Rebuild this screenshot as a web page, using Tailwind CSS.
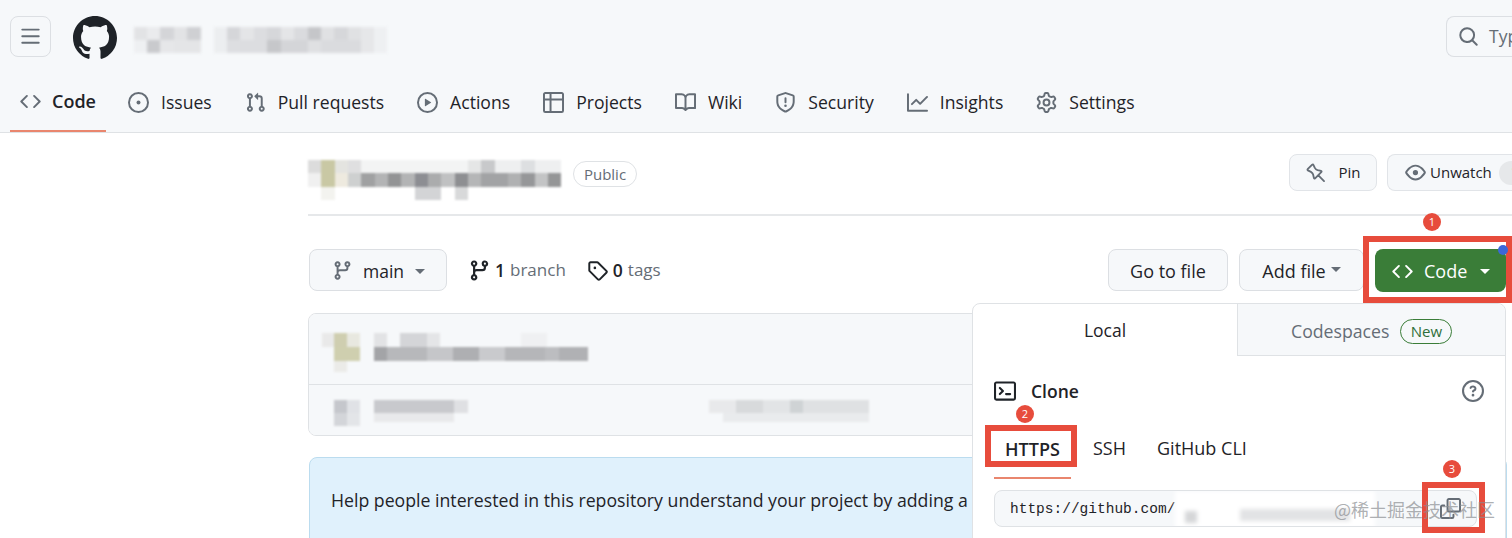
<!DOCTYPE html>
<html lang="en">
  <head>
    <meta charset="UTF-8" />
    <script src="https://cdn.jsdelivr.net/npm/@tailwindcss/browser@4"></script>
    <title>Repository</title>
  </head>
  <body>
    <div class="relative w-[1512px] h-[538px] overflow-hidden bg-white text-[#1f2328] font-['Open_Sans',sans-serif] text-[17.5px]">
      <!-- repo header -->
      <header class="h-[133px] bg-[#f6f8fa] border-b border-[#dfe2e5]">
        <div class="h-[78px] flex items-start pt-[16px] pl-[10px]">
          <button class="w-[41px] h-[41px] flex items-center justify-center rounded-lg border border-[#dcdfe3] bg-[#f6f8fa]">
            <svg class="w-[21px] h-[21px] fill-[#656d76]" viewBox="0 0 16 16"><path d="M1 2.75A.75.75 0 0 1 1.75 2h12.5a.75.75 0 0 1 0 1.5H1.75A.75.75 0 0 1 1 2.75Zm0 5A.75.75 0 0 1 1.75 7h12.5a.75.75 0 0 1 0 1.5H1.75A.75.75 0 0 1 1 7.75ZM1.75 12h12.5a.75.75 0 0 1 0 1.5H1.75a.75.75 0 0 1 0-1.5Z"/></svg>
          </button>
          <svg class="ml-[22px] w-[44px] h-[44px] fill-[#1f2328]" viewBox="0 0 16 16"><path d="M8 0c4.42 0 8 3.58 8 8a8.013 8.013 0 0 1-5.45 7.59c-.4.08-.55-.17-.55-.38 0-.27.01-1.13.01-2.2 0-.75-.25-1.23-.54-1.48 1.78-.2 3.65-.88 3.65-3.95 0-.88-.31-1.59-.82-2.15.08-.2.36-1.02-.08-2.12 0 0-.67-.22-2.2.82-.64-.18-1.32-.27-2-.27-.68 0-1.36.09-2 .27-1.53-1.03-2.2-.82-2.2-.82-.44 1.1-.16 1.92-.08 2.12-.51.56-.82 1.28-.82 2.15 0 3.06 1.86 3.75 3.64 3.95-.23.2-.44.55-.51 1.07-.46.21-1.61.55-2.33-.66-.15-.24-.6-.83-1.23-.82-.67.01-.27.38.01.53.34.19.73.9.82 1.13.16.45.68 1.31 2.69.94 0 .67.01 1.3.01 1.49 0 .21-.15.45-.55.38A7.995 7.995 0 0 1 0 8c0-4.42 3.58-8 8-8Z"/></svg>
          <!-- blurred owner / repo name -->
          <svg class="ml-[16px] mt-[11px] blur-[1.5px]" width="256" height="26" viewBox="0 0 256 26" shape-rendering="crispEdges">
            <rect x="1" width="13" height="13" fill="#e2e3e5"/><rect x="14" width="13" height="13" fill="#eaebed"/><rect x="27" width="14" height="13" fill="#d4d5d8"/><rect x="41" width="13" height="13" fill="#e2e3e5"/><rect x="54" width="14" height="13" fill="#cfd0d3"/>
            <rect x="1" y="13" width="13" height="13" fill="#eef0f2"/><rect x="14" y="13" width="13" height="13" fill="#c9cacd"/><rect x="27" y="13" width="14" height="13" fill="#e6e7e9"/><rect x="41" y="13" width="27" height="13" fill="#e4e5e7"/>
            <rect x="81" width="13" height="26" fill="#eceef0"/><rect x="94" width="13" height="13" fill="#d5d6d9"/><rect x="107" width="14" height="13" fill="#e4e5e7"/><rect x="121" width="13" height="13" fill="#dcdde0"/><rect x="134" width="14" height="13" fill="#d6d7da"/><rect x="148" width="13" height="13" fill="#e4e5e7"/><rect x="161" width="14" height="13" fill="#dadbde"/><rect x="175" width="13" height="13" fill="#c5c6c9"/><rect x="188" width="13" height="13" fill="#e0e1e3"/><rect x="201" width="14" height="13" fill="#d6d7da"/><rect x="215" width="13" height="13" fill="#e0e1e3"/><rect x="228" width="13" height="26" fill="#e6e7e9"/><rect x="241" width="13" height="26" fill="#eef0f2"/>
            <rect x="94" y="13" width="13" height="13" fill="#dddee1"/><rect x="107" y="13" width="27" height="13" fill="#dcdde0"/><rect x="134" y="13" width="14" height="13" fill="#c6c7ca"/><rect x="148" y="13" width="27" height="13" fill="#d4d5d8"/><rect x="175" y="13" width="13" height="13" fill="#dfe0e2"/><rect x="188" y="13" width="40" height="13" fill="#dadbde"/>
          </svg>
          <div class="ml-auto w-[66px] h-[41px] flex items-center gap-[10px] pl-[11px] rounded-l-lg border border-r-0 border-[#dcdfe3] overflow-hidden">
            <svg class="w-[21px] h-[21px] shrink-0 fill-[#656d76]" viewBox="0 0 16 16"><path d="M10.68 11.74a6 6 0 0 1-7.922-8.982 6 6 0 0 1 8.982 7.922l3.04 3.04a.749.749 0 0 1-.326 1.275.749.749 0 0 1-.734-.215ZM11.5 7a4.499 4.499 0 1 0-8.997 0A4.499 4.499 0 0 0 11.5 7Z"/></svg>
            <span class="text-[#656d76]">Typ</span>
          </div>
        </div>
        <nav class="h-[54px] flex pl-[10px] text-[17.6px]">
          <a class="h-[54px] flex items-center gap-[11px] px-[10px] pb-[6px] font-semibold text-[18px] border-b-2 border-[#e9866e]">
            <svg class="w-[21px] h-[21px] fill-[#656d76]" viewBox="0 0 16 16"><path d="m11.28 3.22 4.25 4.25a.75.75 0 0 1 0 1.06l-4.25 4.25a.749.749 0 0 1-1.275-.326.749.749 0 0 1 .215-.734L13.94 8l-3.72-3.72a.749.749 0 0 1 .326-1.275.749.749 0 0 1 .734.215Zm-6.56 0a.751.751 0 0 1 1.042.018.751.751 0 0 1 .018 1.042L2.06 8l3.72 3.72a.749.749 0 0 1-.326 1.275.749.749 0 0 1-.734-.215L.47 8.53a.75.75 0 0 1 0-1.06Z"/></svg>
            Code
          </a>
          <a class="h-[54px] flex items-center gap-[12px] ml-[11px] px-[11px] pb-[6px]">
            <svg class="w-[21px] h-[21px] fill-[#656d76]" viewBox="0 0 16 16"><path d="M8 9.5a1.5 1.5 0 1 0 0-3 1.5 1.5 0 0 0 0 3Z"/><path d="M8 0a8 8 0 1 1 0 16A8 8 0 0 1 8 0ZM1.5 8a6.5 6.5 0 1 0 13 0 6.5 6.5 0 0 0-13 0Z"/></svg>
            Issues
          </a>
          <a class="h-[54px] flex items-center gap-[12px] ml-[11px] px-[11px] pb-[6px]">
            <svg class="w-[21px] h-[21px] fill-[#656d76]" viewBox="0 0 16 16"><path d="M1.5 3.25a2.25 2.25 0 1 1 3 2.122v5.256a2.251 2.251 0 1 1-1.5 0V5.372A2.25 2.25 0 0 1 1.5 3.25Zm5.677-.177L9.573.677A.25.25 0 0 1 10 .854V2.5h1A2.5 2.5 0 0 1 13.5 5v5.628a2.251 2.251 0 1 1-1.5 0V5a1 1 0 0 0-1-1h-1v1.646a.25.25 0 0 1-.427.177L7.177 3.427a.25.25 0 0 1 0-.354ZM3.75 2.5a.75.75 0 1 0 0 1.5.75.75 0 0 0 0-1.5Zm0 9.5a.75.75 0 1 0 0 1.5.75.75 0 0 0 0-1.5Zm8.25.75a.75.75 0 1 0 1.5 0 .75.75 0 0 0-1.5 0Z"/></svg>
            Pull requests
          </a>
          <a class="h-[54px] flex items-center gap-[12px] ml-[11px] px-[11px] pb-[6px]">
            <svg class="w-[21px] h-[21px] fill-[#656d76]" viewBox="0 0 16 16"><path d="M8 0a8 8 0 1 1 0 16A8 8 0 0 1 8 0ZM1.5 8a6.5 6.5 0 1 0 13 0 6.5 6.5 0 0 0-13 0Zm4.879-2.773 4.264 2.559a.25.25 0 0 1 0 .428l-4.264 2.559A.25.25 0 0 1 6 10.559V5.442a.25.25 0 0 1 .379-.215Z"/></svg>
            Actions
          </a>
          <a class="h-[54px] flex items-center gap-[12px] ml-[11px] px-[11px] pb-[6px]">
            <svg class="w-[21px] h-[21px] fill-[#656d76]" viewBox="0 0 16 16"><path d="M0 1.75C0 .784.784 0 1.75 0h12.5C15.216 0 16 .784 16 1.75v12.5A1.75 1.75 0 0 1 14.25 16H1.75A1.75 1.75 0 0 1 0 14.25ZM6.5 6.5v8h7.75a.25.25 0 0 0 .25-.25V6.5Zm8-1.5V1.75a.25.25 0 0 0-.25-.25H6.5V5Zm-13 1.5v7.75c0 .138.112.25.25.25H5v-8ZM5 5V1.5H1.75a.25.25 0 0 0-.25.25V5Z"/></svg>
            Projects
          </a>
          <a class="h-[54px] flex items-center gap-[12px] ml-[11px] px-[11px] pb-[6px]">
            <svg class="w-[21px] h-[21px] fill-[#656d76]" viewBox="0 0 16 16"><path d="M0 1.75A.75.75 0 0 1 .75 1h4.253c1.227 0 2.317.59 3 1.501A3.743 3.743 0 0 1 11.006 1h4.245a.75.75 0 0 1 .75.75v10.5a.75.75 0 0 1-.75.75h-4.507a2.25 2.25 0 0 0-1.591.659l-.622.621a.75.75 0 0 1-1.06 0l-.622-.621A2.25 2.25 0 0 0 5.258 13H.75a.75.75 0 0 1-.75-.75Zm7.251 10.324.004-5.073-.002-2.253A2.25 2.25 0 0 0 5.003 2.5H1.5v9h3.757a3.75 3.75 0 0 1 1.994.574ZM8.755 4.75l-.004 7.322a3.752 3.752 0 0 1 1.992-.572H14.5v-9h-3.495a2.25 2.25 0 0 0-2.25 2.25Z"/></svg>
            Wiki
          </a>
          <a class="h-[54px] flex items-center gap-[12px] ml-[11px] px-[11px] pb-[6px]">
            <svg class="w-[21px] h-[21px] fill-[#656d76]" viewBox="0 0 16 16"><path d="M7.467.133a1.748 1.748 0 0 1 1.066 0l5.25 1.68A1.75 1.75 0 0 1 15 3.48V7c0 1.566-.32 3.182-1.303 4.682-.983 1.498-2.585 2.813-5.032 3.855a1.697 1.697 0 0 1-1.33 0c-2.447-1.042-4.049-2.357-5.032-3.855C1.32 10.182 1 8.566 1 7V3.48a1.75 1.75 0 0 1 1.217-1.667Zm.61 1.429a.25.25 0 0 0-.153 0l-5.25 1.68a.25.25 0 0 0-.174.238V7c0 1.358.275 2.666 1.057 3.86.784 1.194 2.121 2.34 4.366 3.297a.196.196 0 0 0 .154 0c2.245-.956 3.582-2.104 4.366-3.298C13.225 9.666 13.5 8.36 13.5 7V3.48a.251.251 0 0 0-.174-.237l-5.25-1.68ZM8.75 4.75v3a.75.75 0 0 1-1.5 0v-3a.75.75 0 0 1 1.5 0ZM9 10.5a1 1 0 1 1-2 0 1 1 0 0 1 2 0Z"/></svg>
            Security
          </a>
          <a class="h-[54px] flex items-center gap-[12px] ml-[11px] px-[11px] pb-[6px]">
            <svg class="w-[21px] h-[21px] fill-[#656d76]" viewBox="0 0 16 16"><path d="M1.5 1.75V13.5h13.75a.75.75 0 0 1 0 1.5H.75a.75.75 0 0 1-.75-.75V1.75a.75.75 0 0 1 1.5 0Zm14.28 2.53-5.25 5.25a.75.75 0 0 1-1.06 0L7 7.06 4.28 9.78a.751.751 0 0 1-1.042-.018.751.751 0 0 1-.018-1.042l3.25-3.25a.75.75 0 0 1 1.06 0L10 7.94l4.72-4.72a.751.751 0 0 1 1.042.018.751.751 0 0 1 .018 1.042Z"/></svg>
            Insights
          </a>
          <a class="h-[54px] flex items-center gap-[12px] ml-[11px] px-[11px] pb-[6px]">
            <svg class="w-[21px] h-[21px] fill-[#656d76]" viewBox="0 0 16 16"><path d="M8 0a8.2 8.2 0 0 1 .701.031C9.444.095 9.99.645 10.16 1.29l.288 1.107c.018.066.079.158.212.224.231.114.454.243.668.386.123.082.233.09.299.071l1.103-.303c.644-.176 1.392.021 1.82.63.27.385.506.792.704 1.218.315.675.111 1.422-.364 1.891l-.814.806c-.049.048-.098.147-.088.294.016.257.016.515 0 .772-.01.147.038.246.088.294l.814.806c.475.469.679 1.216.364 1.891a7.977 7.977 0 0 1-.704 1.217c-.428.61-1.176.807-1.82.63l-1.102-.302c-.067-.019-.177-.011-.3.071a5.909 5.909 0 0 1-.668.386c-.133.066-.194.158-.211.224l-.29 1.106c-.168.646-.715 1.196-1.458 1.26a8.006 8.006 0 0 1-1.402 0c-.743-.064-1.289-.614-1.458-1.26l-.289-1.106c-.018-.066-.079-.158-.212-.224a5.738 5.738 0 0 1-.668-.386c-.123-.082-.233-.09-.299-.071l-1.103.303c-.644.176-1.392-.021-1.82-.63a8.12 8.12 0 0 1-.704-1.218c-.315-.675-.111-1.422.363-1.891l.815-.806c.05-.048.098-.147.088-.294a6.214 6.214 0 0 1 0-.772c.01-.147-.038-.246-.088-.294l-.815-.806C.635 6.045.431 5.298.746 4.623a7.92 7.92 0 0 1 .704-1.217c.428-.61 1.176-.807 1.82-.63l1.102.302c.067.019.177.011.3-.071.214-.143.437-.272.668-.386.133-.066.194-.158.211-.224l.29-1.106C6.009.645 6.556.095 7.299.03 7.53.01 7.764 0 8 0Zm-.571 1.525c-.036.003-.108.036-.137.146l-.289 1.105c-.147.561-.549.967-.998 1.189-.173.086-.34.183-.5.29-.417.278-.97.423-1.529.27l-1.103-.303c-.109-.03-.175.016-.195.045-.22.312-.412.644-.573.99-.014.031-.021.11.059.19l.815.806c.411.406.562.957.53 1.456a4.709 4.709 0 0 0 0 .582c.032.499-.119 1.05-.53 1.456l-.815.806c-.081.08-.073.159-.059.19.162.346.353.677.573.989.02.03.085.076.195.046l1.102-.303c.56-.153 1.113-.008 1.53.27.161.107.328.204.501.29.447.222.85.629.997 1.189l.289 1.105c.029.109.101.143.137.146a6.6 6.6 0 0 0 1.142 0c.036-.003.108-.036.137-.146l.289-1.105c.147-.561.549-.967.998-1.189.173-.086.34-.183.5-.29.417-.278.97-.423 1.529-.27l1.103.303c.109.029.175-.016.195-.045.22-.313.411-.644.573-.99.014-.031.021-.11-.059-.19l-.815-.806c-.411-.406-.562-.957-.53-1.456a4.709 4.709 0 0 0 0-.582c-.032-.499.119-1.05.53-1.456l.815-.806c.081-.08.073-.159.059-.19a6.464 6.464 0 0 0-.573-.989c-.02-.03-.085-.076-.195-.046l-1.102.303c-.56.153-1.113.008-1.53-.27a4.44 4.44 0 0 0-.501-.29c-.447-.222-.85-.629-.997-1.189l-.289-1.105c-.029-.11-.101-.143-.137-.146a6.6 6.6 0 0 0-1.142 0ZM11 8a3 3 0 1 1-6 0 3 3 0 0 1 6 0ZM9.5 8a1.5 1.5 0 1 0-3.001.001A1.5 1.5 0 0 0 9.5 8Z"/></svg>
            Settings
          </a>
        </nav>
      </header>

      <main class="pl-[308px]">
        <!-- repo title row -->
        <div class="h-[83px] flex items-start border-b-2 border-[#e6e8ea]">
          <svg class="mt-[27px] blur-[1px]" width="265" height="40" viewBox="0 0 265 40" shape-rendering="crispEdges">
            <rect x="0" width="13" height="13" fill="#dcdcdc"/><rect x="13" width="14" height="27" fill="#c9c8a4"/><rect x="27" width="13" height="13" fill="#e4e4e0"/><rect x="40" width="13" height="13" fill="#dfdfe0"/><rect x="53" width="120" height="13" fill="#f3f4f4"/><rect x="160" width="13" height="13" fill="#e5e6e6"/><rect x="173" width="14" height="13" fill="#c8c9cb"/><rect x="187" width="26" height="13" fill="#eeeff0"/><rect x="213" width="14" height="13" fill="#dddfe1"/><rect x="227" width="26" height="13" fill="#eeeff0"/>
            <rect x="0" y="13" width="13" height="14" fill="#f0f0f0"/><rect x="27" y="13" width="13" height="14" fill="#eeeadf"/><rect x="40" y="13" width="13" height="14" fill="#ced0d0"/><rect x="53" y="13" width="14" height="14" fill="#a0a1a2"/><rect x="67" y="13" width="13" height="14" fill="#b3b4b5"/><rect x="80" y="13" width="13" height="14" fill="#939495"/><rect x="93" y="13" width="14" height="14" fill="#b3b4b5"/><rect x="107" y="13" width="13" height="14" fill="#8d8e93"/><rect x="120" y="13" width="13" height="14" fill="#abacad"/><rect x="133" y="13" width="14" height="14" fill="#c0c1c2"/><rect x="147" y="13" width="13" height="14" fill="#8e8f92"/><rect x="160" y="13" width="13" height="14" fill="#b5b6b7"/><rect x="173" y="13" width="27" height="14" fill="#a2a3a5"/><rect x="200" y="13" width="13" height="14" fill="#b0b1b2"/><rect x="213" y="13" width="14" height="14" fill="#969799"/><rect x="227" y="13" width="13" height="14" fill="#c3c4c5"/><rect x="240" y="13" width="13" height="14" fill="#959697"/>
            <rect x="13" y="27" width="14" height="13" fill="#f3f3ef"/><rect x="107" y="27" width="26" height="13" fill="#d3d4d6"/><rect x="147" y="27" width="13" height="13" fill="#d8d9da"/>
          </svg>
          <span class="mt-[28px] h-[26px] w-[64px] flex items-center justify-center rounded-full border border-[#dfe2e5] text-[#656d76] text-[15px]">Public</span>
          <button class="ml-auto mt-[21px] w-[88px] h-[37px] flex items-center justify-center gap-[12px] rounded-lg border border-[#e1e4e8] bg-[#f6f8fa] text-[15px]">
            <svg class="w-[21px] h-[21px]" viewBox="0 0 16 16" fill="none" stroke="#656d76" stroke-width="1.4" stroke-linejoin="round" stroke-linecap="round"><path d="M2 5.5 5.5 2Q6 1.6 6.4 2.2L7.5 4.5Q8.2 5.8 9.6 6.2L12.2 6.8Q13 7 12.4 7.7L7.7 12.4Q7 13 6.8 12.2L6.2 9.6Q5.8 8.2 4.5 7.5L2.2 6.4Q1.6 6 2 5.5ZM10 10 14.5 14.5"/></svg>
            Pin
          </button>
          <button class="ml-[10px] mt-[21px] w-[125px] h-[37px] flex items-center gap-[4px] pl-[17px] rounded-l-lg border border-r-0 border-[#e1e4e8] bg-[#f6f8fa] text-[15px] overflow-hidden">
            <svg class="w-[21px] h-[21px] shrink-0 fill-[#656d76]" viewBox="0 0 16 16"><path d="M8 2c1.981 0 3.671.992 4.933 2.078 1.27 1.091 2.187 2.345 2.637 3.023a1.62 1.62 0 0 1 0 1.798c-.45.678-1.367 1.932-2.637 3.023C11.67 13.008 9.981 14 8 14c-1.981 0-3.671-.992-4.933-2.078C1.797 10.83.88 9.576.43 8.898a1.62 1.62 0 0 1 0-1.798c.45-.677 1.367-1.931 2.637-3.022C4.33 2.992 6.019 2 8 2ZM1.679 7.932a.12.12 0 0 0 0 .136c.411.622 1.241 1.75 2.366 2.717C5.176 11.758 6.527 12.5 8 12.5c1.473 0 2.825-.742 3.955-1.715 1.124-.967 1.954-2.096 2.366-2.717a.12.12 0 0 0 0-.136c-.412-.621-1.242-1.75-2.366-2.717C10.824 4.242 9.473 3.5 8 3.5c-1.473 0-2.825.742-3.955 1.715-1.124.967-1.954 2.096-2.366 2.717ZM8 10a2 2 0 1 1-.001-3.999A2 2 0 0 1 8 10Z"/></svg>
            Unwatch
            <span class="ml-[3px] shrink-0 w-[26px] h-[24px] rounded-full bg-[#e6e8ea] pl-[6px] text-[14px]">1</span>
          </button>
        </div>

        <!-- branch row -->
        <div class="w-[1198px] mt-[33px] h-[43px] flex items-start">
          <button class="ml-px w-[138px] h-[42px] flex items-center pl-[22px] pt-[2px] rounded-lg border border-[#dcdfe3] bg-[#f6f8fa]">
            <svg class="-mt-[2px] w-[21px] h-[21px] fill-[#656d76]" viewBox="0 0 16 16"><path d="M9.5 3.25a2.25 2.25 0 1 1 3 2.122V6A2.5 2.5 0 0 1 10 8.5H6a1 1 0 0 0-1 1v1.128a2.251 2.251 0 1 1-1.5 0V5.372a2.25 2.25 0 1 1 1.5 0v1.836A2.493 2.493 0 0 1 6 7h4a1 1 0 0 0 1-1v-.628A2.25 2.25 0 0 1 9.5 3.25Zm-6 0a.75.75 0 1 0 1.5 0 .75.75 0 0 0-1.5 0Zm8.25-.75a.75.75 0 1 0 0 1.5.75.75 0 0 0 0-1.5ZM4.25 12a.75.75 0 1 0 0 1.5.75.75 0 0 0 0-1.5Z"/></svg>
            <span class="ml-[10px]">main</span>
            <span class="ml-[11px] w-0 h-0 border-x-[5px] border-x-transparent border-t-[5px] border-t-[#656d76]"></span>
          </button>
          <div class="ml-[21px] h-[42px] flex items-center">
            <svg class="w-[23px] h-[23px] fill-[#1f2328]" viewBox="0 0 16 16"><path d="M9.5 3.25a2.25 2.25 0 1 1 3 2.122V6A2.5 2.5 0 0 1 10 8.5H6a1 1 0 0 0-1 1v1.128a2.251 2.251 0 1 1-1.5 0V5.372a2.25 2.25 0 1 1 1.5 0v1.836A2.493 2.493 0 0 1 6 7h4a1 1 0 0 0 1-1v-.628A2.25 2.25 0 0 1 9.5 3.25Zm-6 0a.75.75 0 1 0 1.5 0 .75.75 0 0 0-1.5 0Zm8.25-.75a.75.75 0 1 0 0 1.5.75.75 0 0 0 0-1.5ZM4.25 12a.75.75 0 1 0 0 1.5.75.75 0 0 0 0-1.5Z"/></svg>
            <b class="ml-[4px] font-semibold">1</b>
            <span class="ml-[5px] text-[#656d76] text-[17px]">branch</span>
            <svg class="ml-[21px] w-[21px] h-[21px] fill-[#1f2328]" viewBox="0 0 16 16"><path d="M1 7.775V2.75C1 1.784 1.784 1 2.75 1h5.025c.464 0 .91.184 1.238.513l6.25 6.25a1.75 1.75 0 0 1 0 2.474l-5.026 5.026a1.75 1.75 0 0 1-2.474 0l-6.25-6.25A1.752 1.752 0 0 1 1 7.775Zm1.5 0c0 .066.026.13.073.177l6.25 6.25a.25.25 0 0 0 .354 0l5.025-5.025a.25.25 0 0 0 0-.354l-6.25-6.25a.25.25 0 0 0-.177-.073H2.75a.25.25 0 0 0-.25.25ZM6 5a1 1 0 1 1 0 2 1 1 0 0 1 0-2Z"/></svg>
            <b class="ml-[5px] font-semibold">0</b>
            <span class="ml-[5px] text-[#656d76] text-[17px]">tags</span>
          </div>
          <button class="ml-auto w-[120px] h-[42px] flex items-center justify-center pt-[2px] rounded-lg border border-[#dcdfe3] bg-[#f6f8fa] text-[18px]">Go to file</button>
          <button class="ml-[11px] w-[125px] h-[42px] flex items-center justify-center gap-[5px] pt-[2px] rounded-lg border border-[#dcdfe3] bg-[#f6f8fa] text-[18px]">
            Add file
            <span class="-mt-[4px] w-0 h-0 border-x-[5px] border-x-transparent border-t-[5px] border-t-[#656d76]"></span>
          </button>
          <button class="ml-[11px] w-[131px] h-[43px] flex items-center pl-[17px] pt-[1px] rounded-lg bg-[#3a7d38] text-white text-[18px]">
            <svg class="w-[21px] h-[21px] fill-white" viewBox="0 0 16 16"><path d="m11.28 3.22 4.25 4.25a.75.75 0 0 1 0 1.06l-4.25 4.25a.749.749 0 0 1-1.275-.326.749.749 0 0 1 .215-.734L13.94 8l-3.72-3.72a.749.749 0 0 1 .326-1.275.749.749 0 0 1 .734.215Zm-6.56 0a.751.751 0 0 1 1.042.018.751.751 0 0 1 .018 1.042L2.06 8l3.72 3.72a.749.749 0 0 1-.326 1.275.749.749 0 0 1-.734-.215L.47 8.53a.75.75 0 0 1 0-1.06Z"/></svg>
            <span class="ml-[11px]">Code</span>
            <span class="ml-[13px] w-0 h-0 border-x-[5px] border-x-transparent border-t-[5px] border-t-white"></span>
          </button>
        </div>

        <!-- latest commit box -->
        <div class="w-[1198px] mt-[21px] h-[123px] rounded-lg border border-[#dfe2e5] overflow-hidden flex flex-col">
          <div class="h-[71px] shrink-0 bg-[#f6f8fa] border-b border-[#dfe2e5]">
            <svg class="mt-[19px] blur-[1px]" width="300" height="48" viewBox="0 0 300 48" shape-rendering="crispEdges">
              <rect x="13" y="0" width="12" height="14" fill="#e9e9e9"/><rect x="25" y="0" width="13" height="14" fill="#cfceb0"/><rect x="38" y="0" width="13" height="14" fill="#e8e8e0"/><rect x="25" y="14" width="26" height="14" fill="#cfcfaf"/><rect x="25" y="28" width="13" height="11" fill="#ebebe8"/>
              <rect x="65" y="0" width="13" height="14" fill="#e2e3e5"/><rect x="91" y="0" width="27" height="14" fill="#d4d5d8"/><rect x="118" y="0" width="13" height="14" fill="#e4e5e7"/><rect x="212" y="0" width="26" height="14" fill="#eff0f2"/>
              <rect x="65" y="14" width="13" height="14" fill="#a3a4a7"/><rect x="78" y="14" width="40" height="14" fill="#b7b8bb"/><rect x="118" y="14" width="26" height="14" fill="#c5c6c9"/><rect x="144" y="14" width="26" height="14" fill="#aeafb2"/><rect x="170" y="14" width="26" height="14" fill="#c9cacd"/><rect x="196" y="14" width="40" height="14" fill="#b5b6b9"/><rect x="236" y="14" width="14" height="14" fill="#bcbdc0"/><rect x="250" y="14" width="29" height="14" fill="#b0b1b4"/>
            </svg>
          </div>
          <div class="flex-1 bg-[#f6f8fa]">
            <svg class="mt-[15px] blur-[1px]" width="580" height="30" viewBox="0 0 580 30" shape-rendering="crispEdges">
              <rect x="25" width="13" height="13" fill="#c5c7cc"/><rect x="38" width="13" height="13" fill="#e0e2e6"/><rect x="25" y="13" width="13" height="13" fill="#d3d5d9"/><rect x="38" y="13" width="13" height="13" fill="#e3e5e8"/>
              <rect x="65" width="80" height="13" fill="#c8c9cd"/><rect x="145" width="14" height="13" fill="#dfe0e3"/><rect x="65" y="13" width="80" height="9" fill="#e8e9eb"/>
              <rect x="400" width="27" height="13" fill="#e8e9eb"/><rect x="427" width="27" height="13" fill="#d8dadc"/><rect x="454" width="27" height="13" fill="#e2e4e6"/><rect x="481" width="13" height="13" fill="#cfd3d5"/><rect x="494" width="66" height="13" fill="#dfe1e3"/><rect x="414" y="13" width="146" height="9" fill="#e9ebed"/>
            </svg>
          </div>
        </div>

        <!-- readme hint -->
        <div class="w-[1198px] mt-[21px] ml-px h-[120px] pt-[29px] pl-[21px] rounded-lg border border-[#bbdcef] bg-[#e0f1fc] text-[17.7px]">
          Help people interested in this repository understand your project by adding a README.
        </div>
      </main>

      <!-- clone popover -->
      <div class="absolute left-[972px] top-[303px] w-[534px] h-[260px] bg-white rounded-t-lg border border-[#dfe2e5]">
        <div class="h-[52px] flex">
          <div class="w-[265px] flex items-center justify-center pt-[1px] border-r border-[#dfe2e5]">Local</div>
          <div class="flex-1 flex items-center pl-[53px] pt-[4px] gap-[11px] bg-[#f6f8fa] border-b border-[#dfe2e5] rounded-tr-lg text-[#656d76] text-[17.7px]">
            Codespaces
            <span class="w-[52px] h-[25px] flex items-center justify-center rounded-full border border-[#3a7d38] text-[#2f6f3a] text-[15px]">New</span>
          </div>
        </div>
        <div class="flex items-center pl-[21px] pr-[21px] mt-[22px]">
          <svg class="w-[22px] h-[22px] fill-[#1f2328]" viewBox="0 0 16 16"><path d="M0 2.75C0 1.784.784 1 1.75 1h12.5c.966 0 1.75.784 1.75 1.75v10.5A1.75 1.75 0 0 1 14.25 15H1.75A1.75 1.75 0 0 1 0 13.25Zm1.75-.25a.25.25 0 0 0-.25.25v10.5c0 .138.112.25.25.25h12.5a.25.25 0 0 0 .25-.25V2.75a.25.25 0 0 0-.25-.25ZM7.25 8a.749.749 0 0 1-.22.53l-2.25 2.25a.749.749 0 0 1-1.275-.326.749.749 0 0 1 .215-.734L5.44 8 3.72 6.28a.749.749 0 0 1 .326-1.275.749.749 0 0 1 .734.215l2.25 2.25c.141.14.22.331.22.53Zm1.5 1.5h3a.75.75 0 0 1 0 1.5h-3a.75.75 0 0 1 0-1.5Z"/></svg>
          <span class="ml-[15px] font-semibold">Clone</span>
          <svg class="ml-auto w-[22px] h-[22px] fill-[#656d76]" viewBox="0 0 16 16"><path d="M0 8a8 8 0 1 1 16 0A8 8 0 0 1 0 8Zm8-6.5a6.5 6.5 0 1 0 0 13 6.5 6.5 0 0 0 0-13ZM6.92 6.085h.001a.749.749 0 1 1-1.342-.67c.169-.339.436-.701.849-.977C6.845 4.16 7.369 4 8 4a2.756 2.756 0 0 1 1.637.525c.503.377.863.965.863 1.725 0 .448-.115.83-.329 1.15-.205.307-.47.513-.692.662-.109.072-.22.138-.313.195l-.006.004a6.24 6.24 0 0 0-.26.16.952.952 0 0 0-.276.245.75.75 0 0 1-1.248-.832c.184-.264.42-.489.692-.661.103-.067.207-.132.313-.195l.007-.004c.1-.061.182-.11.258-.161a.969.969 0 0 0 .277-.245C8.96 6.514 9 6.427 9 6.25a.612.612 0 0 0-.262-.525A1.27 1.27 0 0 0 8 5.5c-.369 0-.595.09-.74.187a1.01 1.01 0 0 0-.34.398ZM9 11a1 1 0 1 1-2 0 1 1 0 0 1 2 0Z"/></svg>
        </div>
        <div class="flex mt-[31px] ml-[21px] h-[56px] items-start text-[18px]">
          <span class="w-[77px] h-[44px] pt-[1px] text-center font-semibold border-b-2 border-[#e9866e]">HTTPS</span>
          <span class="ml-[22px]">SSH</span>
          <span class="ml-[31px]">GitHub CLI</span>
        </div>
        <div class="ml-[21px] -mt-[1px] w-[483px] h-[37px] flex items-center pl-[15px] pt-[2px] rounded-lg border border-[#dfe2e5] bg-[#f6f8fa] font-['Liberation_Mono',monospace] text-[14.5px] overflow-hidden">
          https://github.com/
          <svg class="blur-[2px] shrink-0" width="220" height="37" viewBox="0 0 220 37" shape-rendering="crispEdges">
            <rect width="200" height="37" fill="#ffffff"/><rect x="10" y="20" width="12" height="12" fill="#d5d6d8"/><rect x="65" y="18" width="110" height="12" fill="#e2e3e5"/>
          </svg>
        </div>
      </div>

      <!-- tutorial annotations over the screenshot -->
      <div class="absolute left-[1363px] top-[236px] w-[149px] h-[67px] border-[6px] border-[#e74c3c]"></div>
      <div class="absolute left-[985px] top-[425px] w-[92px] h-[42px] border-[6px] border-[#e74c3c]"></div>
      <div class="absolute left-[1422px] top-[482px] w-[63px] h-[51px] border-[6px] border-[#e74c3c]"></div>
      <span class="absolute left-[1423px] top-[213px] w-[18px] h-[18px] rounded-full bg-[#e74c3c] text-white text-[11px] flex items-center justify-center">1</span>
      <span class="absolute left-[1016px] top-[405px] w-[18px] h-[18px] rounded-full bg-[#e74c3c] text-white text-[11px] flex items-center justify-center">2</span>
      <span class="absolute left-[1443px] top-[460px] w-[18px] h-[18px] rounded-full bg-[#e74c3c] text-white text-[11px] flex items-center justify-center">3</span>
      <span class="absolute left-[1498px] top-[245px] w-[10px] h-[10px] rounded-full bg-[#3b67d8]"></span>
      <svg class="absolute left-[1440px] top-[498px] w-[21px] h-[21px] fill-[#656d76]" viewBox="0 0 16 16"><path d="M0 6.75C0 5.784.784 5 1.75 5h1.5a.75.75 0 0 1 0 1.5h-1.5a.25.25 0 0 0-.25.25v7.5c0 .138.112.25.25.25h7.5a.25.25 0 0 0 .25-.25v-1.5a.75.75 0 0 1 1.5 0v1.5A1.75 1.75 0 0 1 9.25 16h-7.5A1.75 1.75 0 0 1 0 14.25Z"/><path d="M5 1.75C5 .784 5.784 0 6.75 0h7.5C15.216 0 16 .784 16 1.75v7.5A1.75 1.75 0 0 1 14.25 11h-7.5A1.75 1.75 0 0 1 5 9.25Zm1.75-.25a.25.25 0 0 0-.25.25v7.5c0 .138.112.25.25.25h7.5a.25.25 0 0 0 .25-.25v-7.5a.25.25 0 0 0-.25-.25Z"/></svg>
      <span class="absolute left-[1334px] top-[497px] text-[18px] leading-[24px] text-[#8a8d91]/70 font-['Noto_Sans_CJK_SC',sans-serif] whitespace-nowrap">@稀土掘金技术社区</span>
    </div>
  </body>
</html>
